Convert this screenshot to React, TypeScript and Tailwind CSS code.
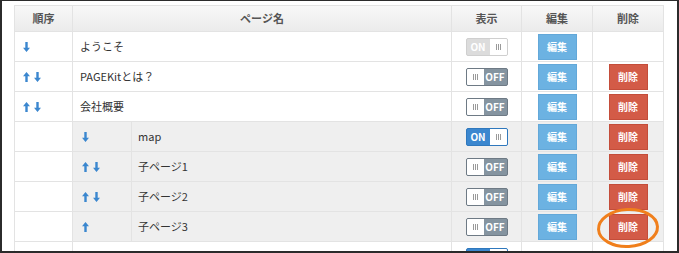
import React from 'react';

type Row = {
  name: string;
  up: boolean;
  down: boolean;
  child?: boolean;
  toggle: 'on' | 'off' | 'locked';
  canEdit: boolean;
  canDelete: boolean;
  marked?: boolean;
};

const rows: Row[] = [
  { name: 'ようこそ', up: false, down: true, toggle: 'locked', canEdit: true, canDelete: false },
  { name: 'PAGEKitとは？', up: true, down: true, toggle: 'off', canEdit: true, canDelete: true },
  { name: '会社概要', up: true, down: true, toggle: 'off', canEdit: true, canDelete: true },
  { name: 'map', up: false, down: true, child: true, toggle: 'on', canEdit: true, canDelete: true },
  { name: '子ページ1', up: true, down: true, child: true, toggle: 'off', canEdit: true, canDelete: true },
  { name: '子ページ2', up: true, down: true, child: true, toggle: 'off', canEdit: true, canDelete: true },
  { name: '子ページ3', up: true, down: false, child: true, toggle: 'off', canEdit: true, canDelete: true, marked: true },
  { name: 'お問い合わせ', up: true, down: true, toggle: 'on', canEdit: false, canDelete: false },
];

function Arrow({ dir }: { dir: 'up' | 'down' }) {
  return (
    <svg width="7" height="10" viewBox="0 0 7 10" className={dir === 'down' ? 'rotate-180' : ''}>
      <path d="M3.5 0 L7 4.2 L4.7 4.2 L4.7 10 L2.3 10 L2.3 4.2 L0 4.2 Z" fill="#3b87cf" />
    </svg>
  );
}

function Arrows({ up, down }: { up: boolean; down: boolean }) {
  return (
    <div className="flex items-center gap-[4px]">
      {up && <Arrow dir="up" />}
      {down && <Arrow dir="down" />}
    </div>
  );
}

function Knob() {
  return (
    <span className="flex h-full w-[17px] items-center justify-center gap-[1px] bg-white">
      <span className="h-[6px] w-px bg-[#9a9a9a]" />
      <span className="h-[6px] w-px bg-[#9a9a9a]" />
      <span className="h-[6px] w-px bg-[#9a9a9a]" />
    </span>
  );
}

function Toggle({ state }: { state: 'on' | 'off' | 'locked' }) {
  if (state === 'off') {
    return (
      <div className="flex h-[18px] w-[42px] items-stretch overflow-hidden rounded-[2px] border border-[#6e7a85] bg-[#8594a0]">
        <Knob />
        <span className="flex flex-1 items-center justify-center text-[10px] font-bold text-white">OFF</span>
      </div>
    );
  }
  const locked = state === 'locked';
  return (
    <div
      className={
        locked
          ? 'flex h-[18px] w-[42px] items-stretch overflow-hidden rounded-[2px] border border-[#cfcfcf] bg-[#dcdcdc]'
          : 'flex h-[18px] w-[42px] items-stretch overflow-hidden rounded-[2px] border border-[#2f78bd] bg-[#3b87cf]'
      }
    >
      <span className="flex flex-1 items-center justify-center text-[10px] font-bold text-white">ON</span>
      <Knob />
    </div>
  );
}

const cell = 'border border-[#e3e3e3] p-0';

export default function App() {
  return (
    <div
      className="h-[253px] w-[679px] overflow-hidden border-t border-r-2 border-b-2 border-l-2 border-[#2b2b2b] bg-white pl-3 pt-1"
      style={{ fontFamily: '"Noto Sans CJK JP", "Noto Sans", sans-serif' }}
    >
      <table className="w-[649px] table-fixed border-collapse text-[11px] text-[#333]">
        <colgroup>
          <col className="w-[58px]" />
          <col className="w-[59px]" />
          <col className="w-[320px]" />
          <col className="w-[70px]" />
          <col className="w-[71px]" />
          <col className="w-[71px]" />
        </colgroup>
        <thead>
          <tr className="h-[26px] bg-gradient-to-b from-[#f8f8f8] to-[#ebebeb] text-[11px] font-bold leading-none text-[#555]">
            <th className={cell}>順序</th>
            <th className={cell} colSpan={2}>ページ名</th>
            <th className={cell}>表示</th>
            <th className={cell}>編集</th>
            <th className={cell}>削除</th>
          </tr>
        </thead>
        <tbody>
          {rows.map((r) => (
            <tr key={r.name} className="h-[30px]">
              {r.child ? (
                <>
                  <td className={cell} />
                  <td className={`${cell} bg-[#efefef] pl-[9px]`}>
                    <Arrows up={r.up} down={r.down} />
                  </td>
                  <td className={`${cell} bg-[#efefef] pl-[6px]`}>{r.name}</td>
                </>
              ) : (
                <>
                  <td className={`${cell} pl-[8px]`}>
                    <Arrows up={r.up} down={r.down} />
                  </td>
                  <td className={`${cell} pl-[7px]`} colSpan={2}>
                    {r.name}
                  </td>
                </>
              )}
              <td className={`${cell} ${r.child ? 'bg-[#efefef]' : ''}`}>
                <div className="flex justify-center">
                  <Toggle state={r.toggle} />
                </div>
              </td>
              <td className={`${cell} ${r.child ? 'bg-[#efefef]' : ''}`}>
                {r.canEdit && (
                  <div className="flex justify-center">
                    <button className="flex h-[26px] w-[39px] items-center justify-center border border-[#63a8d9] bg-[#6cb2e2] text-[10px] font-bold text-white">
                      編集
                    </button>
                  </div>
                )}
              </td>
              <td className={`${cell} relative ${r.child ? 'bg-[#efefef]' : ''}`}>
                {r.canDelete && (
                  <div className="flex justify-center">
                    <button className="flex h-[26px] w-[39px] items-center justify-center border border-[#c44d3a] bg-[#d35b47] text-[10px] font-bold text-white">
                      削除
                    </button>
                  </div>
                )}
                {r.marked && (
                  <svg className="absolute left-[3px] top-[-5px]" width="64" height="42" viewBox="0 0 64 42">
                    <ellipse cx="32" cy="21" rx="29.5" ry="18.5" fill="none" stroke="#f07f1c" strokeWidth="3" transform="rotate(-3 32 21)" />
                  </svg>
                )}
              </td>
            </tr>
          ))}
        </tbody>
      </table>
    </div>
  );
}
